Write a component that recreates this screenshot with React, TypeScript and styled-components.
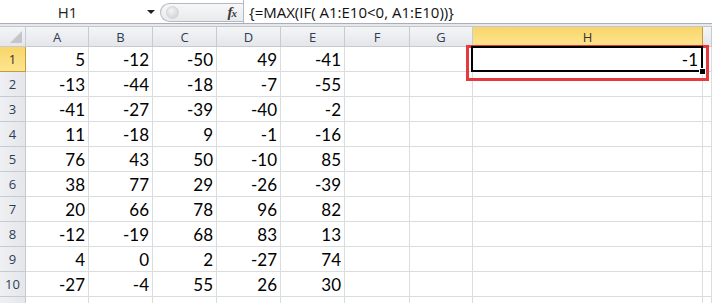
import styled, { createGlobalStyle, css } from 'styled-components';

const GlobalStyle = createGlobalStyle`
    html, body {
        margin: 0;
        padding: 0;
        background: #fff;
        overflow: hidden;
    }
`;

const COLS = ['A', 'B', 'C', 'D', 'E', 'F', 'G', 'H', ''];
const WIDTHS = [26, 63, 64, 64, 64, 64, 65, 63, 230, 9];

const DATA = [
    [5, -12, -50, 49, -41],
    [-13, -44, -18, -7, -55],
    [-41, -27, -39, -40, -2],
    [11, -18, 9, -1, -16],
    [76, 43, 50, -10, 85],
    [38, 77, 29, -26, -39],
    [20, 66, 78, 96, 82],
    [-12, -19, 68, 83, 13],
    [4, 0, 2, -27, 74],
    [-27, -4, 55, 26, 30],
];

const Sheet = styled.div`
    width: 712px;
    height: 303px;
    overflow: hidden;
    background: #fff;
`;

const FormulaBar = styled.div`
    display: flex;
    height: 23px;
    border-bottom: 1px solid #a9afb7;
    background: #fff;
`;

const NameBox = styled.div`
    width: 160px;
    display: flex;
    align-items: center;
    font-family: 'Open Sans', 'Noto Sans', sans-serif;
    font-size: 15px;
    color: #222;
`;

const NameText = styled.span`
    flex: 1;
    text-align: center;
    padding-right: 12px;
`;

const DropArrow = styled.span`
    width: 0;
    height: 0;
    margin-right: 5px;
    border-left: 4px solid transparent;
    border-right: 4px solid transparent;
    border-top: 4px solid #222;
`;

const FxControl = styled.div`
    width: 83px;
    margin: 3px 0 1px;
    display: flex;
    align-items: center;
    justify-content: space-between;
    border: 1px solid #b4b9c0;
    border-right: none;
    border-radius: 10px 0 0 10px;
    background: linear-gradient(#f7f7f8, #e9eaec);
    box-sizing: border-box;
`;

const Knob = styled.span`
    width: 11px;
    height: 11px;
    margin-left: 5px;
    border-radius: 50%;
    background: radial-gradient(circle at 40% 35%, #f4f4f4, #c9cbce);
    border: 1px solid #d3d5d8;
`;

const Fx = styled.span`
    font-family: 'Liberation Serif', serif;
    font-style: italic;
    font-weight: bold;
    font-size: 15px;
    color: #3a3a3a;
    margin-right: 7px;
    letter-spacing: -1px;

    small {
        font-size: 11px;
    }
`;

const FormulaInput = styled.div`
    flex: 1;
    display: flex;
    align-items: center;
    padding-left: 5px;
    border-left: 1px solid #b4b9c0;
    font-family: 'Open Sans', 'Noto Sans', sans-serif;
    font-size: 15px;
    color: #111;
`;

const Band = styled.div`
    height: 2px;
    background: #e6e8eb;
    border-bottom: 1px solid #c4c8cd;
`;

const Grid = styled.div`
    display: grid;
    grid-template-columns: ${WIDTHS.map((w) => `${w}px`).join(' ')};
    grid-template-rows: 20px repeat(11, 25px);
`;

const headerBase = css<{ $active?: boolean }>`
    box-sizing: border-box;
    display: flex;
    align-items: center;
    justify-content: center;
    font-family: 'Open Sans', 'Noto Sans', sans-serif;
    font-size: 13px;
    color: #2f3d52;
    border-right: 1px solid #c7cbd1;
    border-bottom: 1px solid #c7cbd1;
    background: linear-gradient(#f4f5f7, #e4e6ea);
    ${(p) =>
        p.$active &&
        css`
            background: linear-gradient(#f9d56a, #fde58f);
            border-right-color: #c59a3c;
            border-bottom-color: #c59a3c;
            color: #333;
        `}
`;

const Corner = styled.div`
    ${headerBase};
    position: relative;

    &::after {
        content: '';
        position: absolute;
        right: 3px;
        bottom: 3px;
        border-left: 12px solid transparent;
        border-bottom: 12px solid #c3c6cb;
    }
`;

const ColHead = styled.div<{ $active?: boolean }>`
    ${headerBase};
`;

const RowHead = styled.div<{ $active?: boolean }>`
    ${headerBase};
    background: linear-gradient(90deg, #eef0f3, #e4e6ea);
    ${(p) =>
        p.$active &&
        css`
            background: linear-gradient(#f9d56a, #fde58f);
        `}
`;

const Cell = styled.div<{ $selected?: boolean }>`
    box-sizing: border-box;
    display: flex;
    align-items: flex-end;
    justify-content: flex-end;
    padding: 0 3px 2px 0;
    border-right: 1px solid #dadcdd;
    border-bottom: 1px solid #dadcdd;
    font-family: 'Lato', 'Liberation Sans', sans-serif;
    font-size: 17px;
    line-height: 19px;
    color: #000;
    ${(p) =>
        p.$selected &&
        css`
            position: relative;
            padding-right: 4px;
        `}
`;

const Selection = styled.div`
    position: absolute;
    left: -2px;
    top: -1px;
    right: -1px;
    bottom: -1px;
    border: 2px solid #000;
`;

const FillHandle = styled.div`
    position: absolute;
    right: -4px;
    bottom: -4px;
    width: 5px;
    height: 5px;
    background: #000;
    border: 1px solid #fff;
`;

const Highlight = styled.div`
    position: absolute;
    left: -7px;
    top: -2px;
    right: -7px;
    bottom: -10px;
    border: 3px solid #e5393d;
`;

const CellValue = styled.span`
    position: relative;
    z-index: 1;
`;

export default function App() {
    const rows = [...DATA.map((r) => [...r.map(String), '', '', '', '']), null];

    return (
        <>
            <GlobalStyle />
            <Sheet>
                <FormulaBar>
                    <NameBox>
                        <NameText>H1</NameText>
                        <DropArrow />
                    </NameBox>
                    <FxControl>
                        <Knob />
                        <Fx>
                            f<small>x</small>
                        </Fx>
                    </FxControl>
                    <FormulaInput>{'{=MAX(IF( A1:E10<0, A1:E10))}'}</FormulaInput>
                </FormulaBar>
                <Band />
                <Grid>
                    <Corner />
                    {COLS.map((c, i) => (
                        <ColHead key={i} $active={c === 'H'}>
                            {c}
                        </ColHead>
                    ))}
                    {rows.map((row, ri) => (
                        <Row key={ri} index={ri} values={row} />
                    ))}
                </Grid>
            </Sheet>
        </>
    );
}

function Row({ index, values }: { index: number; values: string[] | null }) {
    const cells = values ?? COLS.map(() => '');
    return (
        <>
            <RowHead $active={index === 0}>{values ? index + 1 : ''}</RowHead>
            {cells.map((v, ci) => {
                const selected = index === 0 && ci === 7;
                return (
                    <Cell key={ci} $selected={selected}>
                        {selected ? (
                            <>
                                <Highlight />
                                <Selection />
                                <FillHandle />
                                <CellValue>-1</CellValue>
                            </>
                        ) : (
                            v
                        )}
                    </Cell>
                );
            })}
        </>
    );
}
